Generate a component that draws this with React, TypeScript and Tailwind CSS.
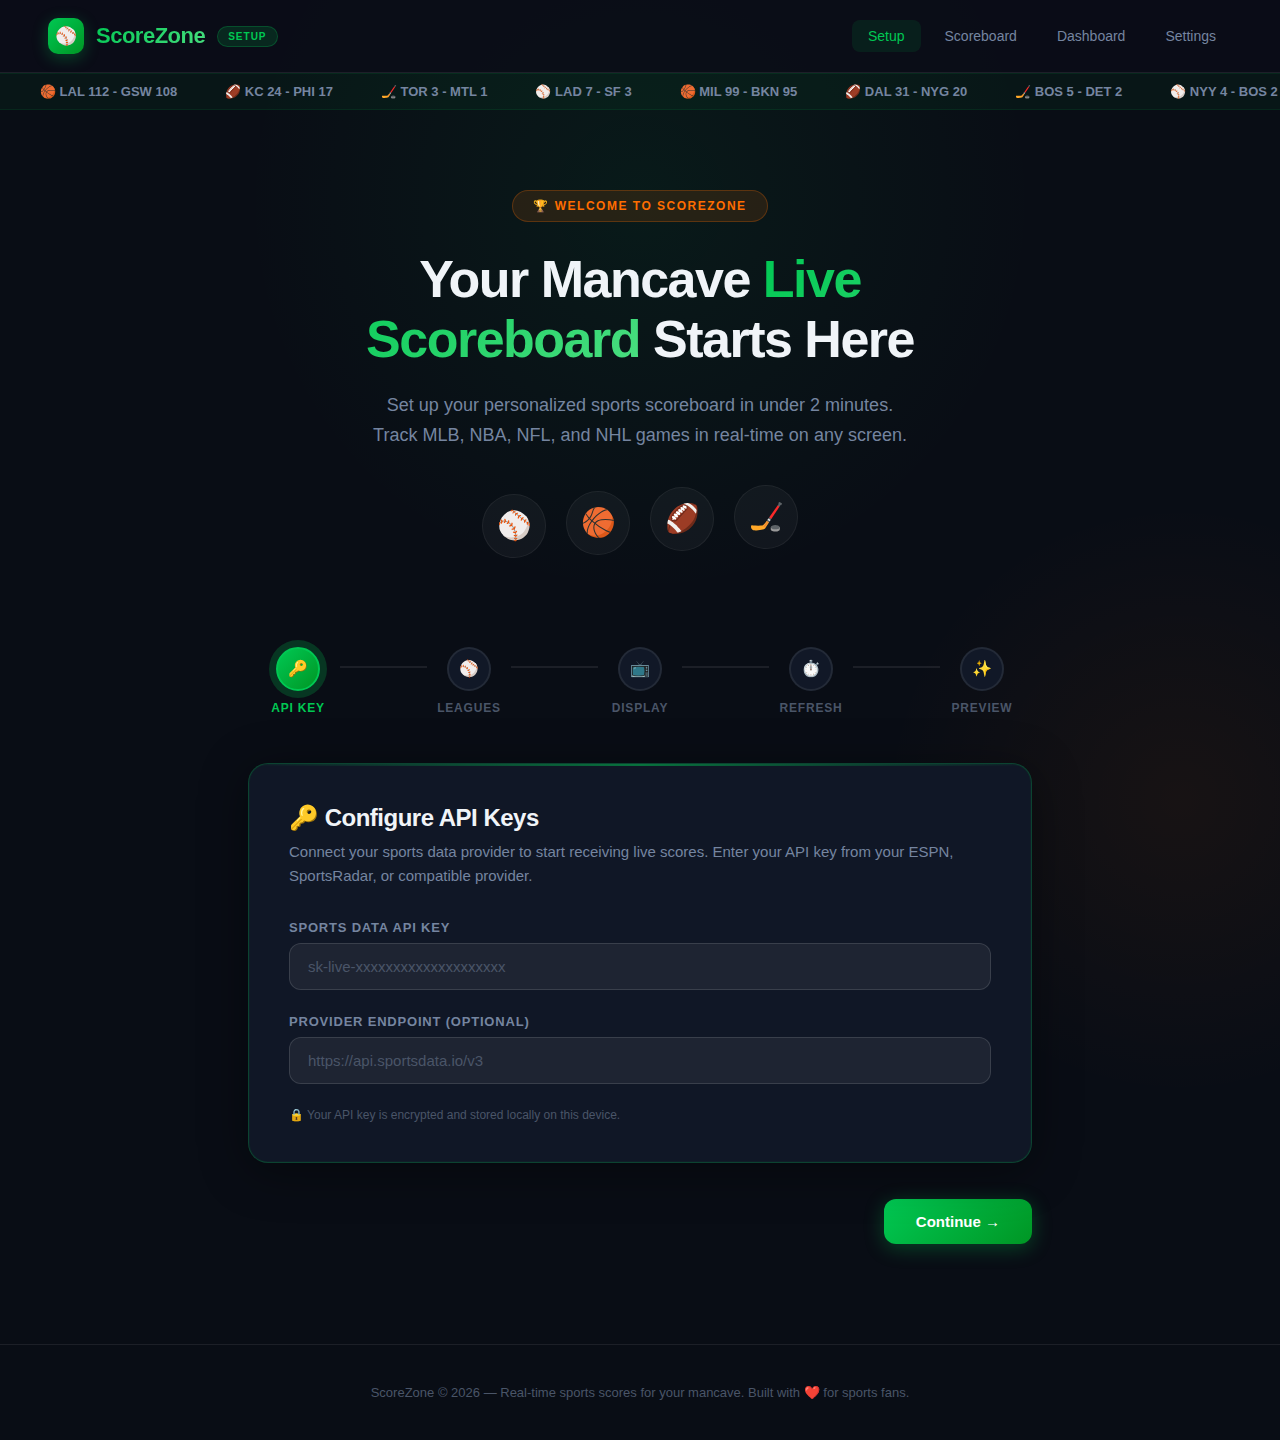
import { useState } from 'react'
import clsx from 'clsx'

const NAV_LINKS = ['Setup', 'Scoreboard', 'Dashboard', 'Settings']

const TICKER = [
  '🏀 LAL 112 - GSW 108',
  '🏈 KC 24 - PHI 17',
  '🏒 TOR 3 - MTL 1',
  '⚾ LAD 7 - SF 3',
  '🏀 MIL 99 - BKN 95',
  '🏈 DAL 31 - NYG 20',
  '🏒 BOS 5 - DET 2',
  '⚾ NYY 4 - BOS 2',
]

// the balls sit on a rising wave
const SPORTS = [
  { icon: '⚾', lift: 'translate-y-0' },
  { icon: '🏀', lift: '-translate-y-[3px]' },
  { icon: '🏈', lift: '-translate-y-[7px]' },
  { icon: '🏒', lift: '-translate-y-[9px]' },
]

const STEPS = [
  { icon: '🔑', label: 'API Key' },
  { icon: '⚾', label: 'Leagues' },
  { icon: '📺', label: 'Display' },
  { icon: '⏱️', label: 'Refresh' },
  { icon: '✨', label: 'Preview' },
]

function Header() {
  return (
    <header className="flex items-center justify-between border-b border-white/8 bg-[#0a0d18]/85 px-12 py-[18px]">
      <div className="flex items-center gap-3">
        <div className="flex h-9 w-9 items-center justify-center rounded-[10px] bg-[linear-gradient(135deg,#00c853,#009624)] text-lg shadow-[0_4px_16px_rgba(0,200,83,0.3)]">
          ⚾
        </div>
        <span className="bg-[linear-gradient(135deg,#00c853,#4ade80)] bg-clip-text text-[22px] leading-9 font-bold tracking-[-0.5px] text-transparent">
          ScoreZone
        </span>
        <span className="rounded-full border border-[#00c853]/25 bg-[#00c853]/15 px-[10px] py-1 text-[10px] leading-[11px] font-bold tracking-[1px] text-[#00c853]">
          SETUP
        </span>
      </div>
      <nav className="flex gap-2">
        {NAV_LINKS.map((link, i) => (
          <a
            className={clsx(
              'rounded-lg px-4 py-2 text-sm leading-4 font-medium',
              i === 0 ? 'bg-[#00c853]/10 text-[#00c853]' : 'text-[#7585a0]',
            )}
            href="#"
            key={link}
          >
            {link}
          </a>
        ))}
      </nav>
    </header>
  )
}

function Ticker() {
  return (
    <div className="overflow-hidden border-y border-[#00c853]/10 bg-[#00c853]/5 px-10 py-2">
      <div className="flex gap-12 text-[13px] leading-[19px] font-semibold whitespace-nowrap text-[#7585a0]">
        {TICKER.map((score) => (
          <span key={score}>{score}</span>
        ))}
      </div>
    </div>
  )
}

function Hero() {
  return (
    <section className="flex flex-col items-center px-12 pt-20 text-center">
      <div className="rounded-full border border-[#ff6d00]/25 bg-[#ff6d00]/12 px-5 py-2 text-xs leading-[14px] font-bold tracking-[1.5px] text-[#ff6d00]">
        🏆 WELCOME TO SCOREZONE
      </div>
      <h1 className="mt-[27px] max-w-[700px] text-[52px] leading-[60px] font-bold tracking-[-1.5px] text-[#f0f4f8]">
        Your Mancave{' '}
        <span className="bg-[linear-gradient(135deg,#00c853,#4ade80)] bg-clip-text text-transparent">
          Live
          <br />
          Scoreboard
        </span>{' '}
        Starts Here
      </h1>
      <p className="mt-[21px] max-w-[540px] text-lg leading-[30px] text-[#7585a0]">
        Set up your personalized sports scoreboard in under 2 minutes. Track MLB, NBA, NFL, and NHL games in real-time on
        any screen.
      </p>
      <div className="mt-11 flex gap-5">
        {SPORTS.map(({ icon, lift }) => (
          <div
            className={clsx(
              'flex h-16 w-16 items-center justify-center rounded-full border border-white/6 bg-white/4 text-[28px]',
              lift,
            )}
            key={icon}
          >
            {icon}
          </div>
        ))}
      </div>
    </section>
  )
}

function Stepper({ current }: { current: number }) {
  return (
    <ol className="flex px-2">
      {STEPS.map(({ icon, label }, i) => (
        <li className={clsx('flex', i > 0 && 'flex-1')} key={label}>
          {i > 0 ? <div className="mt-[19px] h-0.5 flex-1 bg-white/8" /> : null}
          <div className="flex w-[84px] flex-col items-center">
            <div
              className={clsx(
                'flex h-11 w-11 items-center justify-center rounded-full border-2 text-base',
                i === current
                  ? 'border-[#00c853] bg-[linear-gradient(135deg,#00c853,#009624)] shadow-[0_0_0_7px_rgba(0,200,83,0.22)]'
                  : 'border-white/8 bg-[#111827]',
              )}
            >
              {icon}
            </div>
            <span
              className={clsx(
                'mt-2 text-xs leading-[18px] font-semibold tracking-[0.8px] uppercase',
                i === current ? 'text-[#00c853]' : 'text-[#4a5568]',
              )}
            >
              {label}
            </span>
          </div>
        </li>
      ))}
    </ol>
  )
}

type FieldProps = {
  id: string
  label: string
  placeholder: string
  value: string
  onChange: (value: string) => void
}

function Field({ id, label, placeholder, value, onChange }: FieldProps) {
  return (
    <div className="mb-6">
      <label className="mb-2 block text-[13px] leading-[15px] font-semibold tracking-[0.8px] text-[#7585a0] uppercase" htmlFor={id}>
        {label}
      </label>
      <input
        className="block w-full rounded-xl border border-white/12 bg-white/6 px-[18px] py-[14px] text-[15px] leading-[17px] text-[#f0f4f8] outline-none placeholder:text-[#4a5568] focus:border-[#00c853]"
        id={id}
        onChange={(e) => onChange(e.target.value)}
        placeholder={placeholder}
        type="text"
        value={value}
      />
    </div>
  )
}

function ApiKeyCard() {
  const [apiKey, setApiKey] = useState('')
  const [endpoint, setEndpoint] = useState('')

  return (
    <div className="relative mt-[46px] overflow-hidden rounded-[20px] border border-[#00c853]/25 bg-[#101726] p-10 shadow-[inset_0_0_0_1px_rgba(0,200,83,0.05),0_8px_48px_rgba(0,0,0,0.4)]">
      <div className="absolute inset-x-0 top-0 h-0.5 bg-[linear-gradient(90deg,transparent,#00c853,transparent)] opacity-50" />
      <h2 className="mb-2 text-2xl leading-7 font-bold tracking-[-0.5px] text-[#f0f4f8]">🔑 Configure API Keys</h2>
      <p className="mb-8 text-[15px] leading-6 text-[#7585a0]">
        Connect your sports data provider to start receiving live scores. Enter your API key from your ESPN, SportsRadar,
        or compatible provider.
      </p>
      <Field
        id="api-key"
        label="Sports Data API Key"
        onChange={setApiKey}
        placeholder="sk-live-xxxxxxxxxxxxxxxxxxxx"
        value={apiKey}
      />
      <Field
        id="endpoint"
        label="Provider Endpoint (Optional)"
        onChange={setEndpoint}
        placeholder="https://api.sportsdata.io/v3"
        value={endpoint}
      />
      <p className="text-xs leading-[14px] text-[#4a5568]">🔒 Your API key is encrypted and stored locally on this device.</p>
    </div>
  )
}

export default function App() {
  const [step, setStep] = useState(0)

  return (
    <div className="relative isolate flex min-h-screen flex-col overflow-hidden bg-[#090d15] font-['Liberation_Sans',Arial,sans-serif]">
      {/* stadium glow: green behind the hero, orange by the card */}
      <div className="absolute -top-[200px] left-1/2 -z-10 h-[800px] w-[800px] -translate-x-1/2 bg-[radial-gradient(circle,rgba(0,200,83,0.07)_0%,transparent_70%)]" />
      <div className="absolute top-[500px] -right-[200px] -z-10 h-[600px] w-[600px] bg-[radial-gradient(circle,rgba(255,109,0,0.06)_0%,transparent_70%)]" />

      <Header />
      <Ticker />
      <main className="flex-1">
        <Hero />
        <section className="mx-auto max-w-[880px] px-12 pt-[89px] pb-[100px]">
          <Stepper current={step} />
          <ApiKeyCard />
          <div className="mt-9 flex justify-end">
            <button
              className="rounded-xl bg-[linear-gradient(135deg,#00c853,#009624)] px-8 py-[14px] text-[15px] leading-[17px] font-bold text-white shadow-[0_4px_20px_rgba(0,200,83,0.3)]"
              onClick={() => setStep((s) => Math.min(s + 1, STEPS.length - 1))}
              type="button"
            >
              Continue →
            </button>
          </div>
        </section>
      </main>
      <footer className="border-t border-white/8 px-12 py-10 text-center text-[13px] leading-[15px] text-[#4a5568]">
        ScoreZone © 2026 — Real-time sports scores for your mancave. Built with ❤️ for sports fans.
      </footer>
    </div>
  )
}
